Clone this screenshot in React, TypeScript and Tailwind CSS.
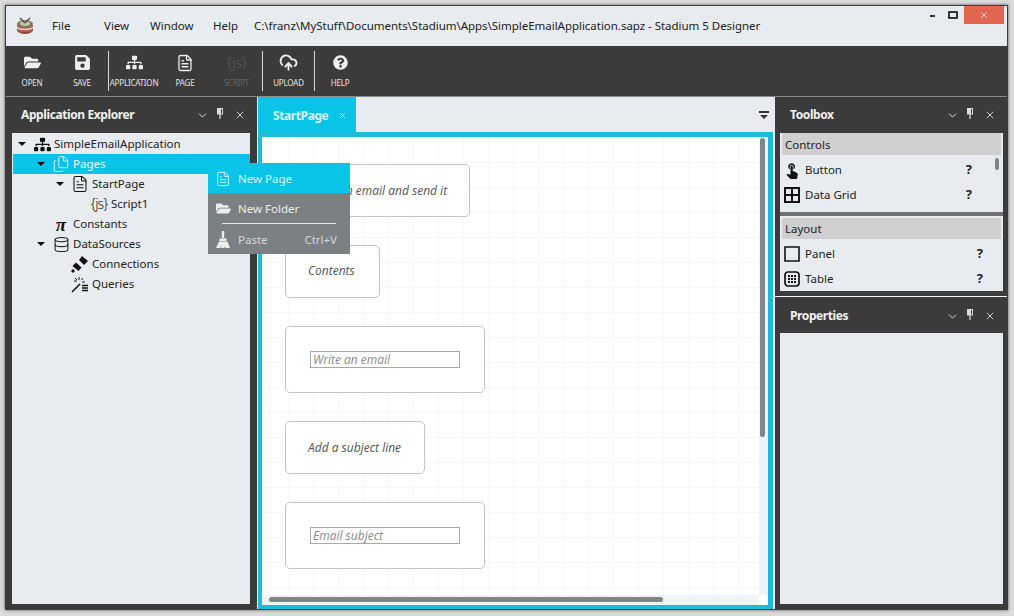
import React from "react";
import { ChevronDown, CloudUpload, Database, FileText, Files, X } from "lucide-react";
import { FaFolderOpen, FaQuestionCircle, FaSave, FaSitemap } from "react-icons/fa";
import { MdTouchApp } from "react-icons/md";

const Pin = ({ className = "" }: { className?: string }) => (
  <svg width="8" height="11" viewBox="0 0 8 11" className={className}>
    <path d="M1 0h6v6.5H1z M3.4 6.5h1.2V11H3.4z" fill="currentColor" />
    <path d="M5 1h1v4.5H5z" fill="#3b3b3b" />
  </svg>
);

const Logo = () => (
  <svg width="18" height="18" viewBox="0 0 18 18">
    <ellipse cx="9" cy="13" rx="8" ry="4" fill="#8e4a3c" />
    <path d="M1 8v5c2 3 14 3 16 0V8z" fill="#b5584a" />
    <path d="M1 9.5c2 3 14 3 16 0v1.5c-2 3-14 3-16 0z" fill="#f0d9d0" />
    <ellipse cx="9" cy="7" rx="8" ry="4" fill="#7d7a5c" />
    <ellipse cx="9" cy="6.5" rx="5" ry="2.4" fill="#c9c4a8" />
    <path d="M4 1l5 5M14 1L9 6" stroke="#5a3a30" strokeWidth="1.2" />
  </svg>
);

const Plug = () => (
  <svg width="18" height="18" viewBox="0 0 18 18" fill="#111">
    <path d="M11 1l6 5-4 4-5-5z" />
    <path d="M5 7.5l5.5 5-3 3.500-6-5z" />
    <path d="M0 16l2-2 2 2-2 2z" />
  </svg>
);

const Wand = () => (
  <svg width="18" height="18" viewBox="0 0 18 18" fill="none" stroke="#111">
    <path d="M1 17l8-8" strokeWidth="1.6" />
    <path d="M8 2v3M3 6h3M12 3l-1.500 2M14 7h-3M4 3l2 2" strokeWidth="1" />
    <path d="M11 10.500h6M11 13h6M11 15.500h6" strokeWidth="1.700" />
  </svg>
);

const Brush = () => (
  <svg width="14" height="17" viewBox="0 0 14 17" fill="#eee">
    <path d="M5.800 0h2.400v7H5.800z" />
    <path d="M3.500 7.500h7v2.500h-7z" />
    <path d="M3 10.500h8.500L14 17H9.500L9 14.500 8.500 17H5.500L5 14.500 4.500 17H0z" />
  </svg>
);

const GridIcon = () => (
  <svg width="16" height="16" viewBox="0 0 16 16" fill="none" stroke="#111" strokeWidth="2">
    <path d="M1 1h14v14H1z M8 1v14 M1 8h14" />
  </svg>
);

const PanelIcon = () => (
  <svg width="16" height="16" viewBox="0 0 16 16" fill="none" stroke="#111" strokeWidth="1.600">
    <path d="M1 1h14v14H1z" />
  </svg>
);

const TableIcon = () => (
  <svg width="16" height="16" viewBox="0 0 16 16">
    <rect x="1" y="1" width="14" height="14" rx="3" fill="none" stroke="#111" strokeWidth="1.700" />
    <path d="M4 4h2v2H4zM7 4h2v2H7zM10 4h2v2h-2zM4 7h2v2H4zM7 7h2v2H7zM10 7h2v2h-2zM4 10h2v2H4zM7 10h2v2H7zM10 10h2v2h-2z" fill="#111" />
  </svg>
);

const Arrow = () => (
  <span className="block w-0 h-0 border-x-[4px] border-x-transparent border-t-[4px] border-t-[#111]" />
);

type TreeRow = {
  label: string;
  pad: string;
  arrow?: boolean;
  selected?: boolean;
  icon: React.ReactNode;
};

const treeRows: TreeRow[] = [
  { label: "SimpleEmailApplication", pad: "pl-0", arrow: true, icon: <FaSitemap size={17} color="#111" /> },
  { label: "Pages", pad: "pl-[19px]", arrow: true, selected: true, icon: <Files size={18} color="#d7f1f8" strokeWidth={1.3} /> },
  { label: "StartPage", pad: "pl-[38px]", arrow: true, icon: <FileText size={18} color="#111" strokeWidth={1.400} /> },
  { label: "Script1", pad: "pl-[57px]", icon: <span className="text-[14px] leading-none tracking-[-1px] font-light text-[#222]">{"{js}"}</span> },
  { label: "Constants", pad: "pl-[19px]", icon: <span className="[font-family:'Liberation_Serif',serif] italic font-bold text-[19px] leading-none text-[#111]">π</span> },
  { label: "DataSources", pad: "pl-[19px]", arrow: true, icon: <Database size={17} color="#222" strokeWidth={1.500} /> },
  { label: "Connections", pad: "pl-[38px]", icon: <Plug /> },
  { label: "Queries", pad: "pl-[38px]", icon: <Wand /> },
];

const toolItems = [
  { label: "OPEN", w: "w-[50px]", icon: <FaFolderOpen size={17} color="#eee" /> },
  { label: "SAVE", w: "w-[50px]", icon: <FaSave size={17} color="#eee" /> },
  { sep: "ml-px" },
  { label: "APPLICATION", w: "w-[50px]", icon: <FaSitemap size={17} color="#eee" /> },
  { label: "PAGE", w: "w-[52px]", icon: <FileText size={18} color="#eee" strokeWidth={1.700} /> },
  { label: "SCRIPT", w: "w-[51px]", dim: true, icon: <span className="text-[15px] leading-none tracking-[-0.5px] font-light text-[#5c5c5c]">{"{js}"}</span> },
  { sep: "ml-0" },
  { label: "UPLOAD", w: "w-[51px]", icon: <CloudUpload size={19} color="#eee" strokeWidth={2.400} /> },
  { sep: "ml-0" },
  { label: "HELP", w: "w-[50px]", icon: <FaQuestionCircle size={15} color="#eee" /> },
];

const PanelTitle = ({ title, extra }: { title: string; extra?: string }) => (
  <div className={`flex items-center shrink-0 h-[36px] pl-[15px] pr-[11px] text-[#dcdcdc] ${extra ?? ""}`}>
    <span className="flex-1 text-[12px] tracking-[-0.4px] font-bold text-[#f2f2f2]">{title}</span>
    <ChevronDown size={13} strokeWidth={1.800} />
    <Pin className="ml-[7px] mb-[3px]" />
    <X size={12} strokeWidth={1.800} className="ml-[10px]" />
  </div>
);

const ToolRow = ({ icon, label, q }: { icon: React.ReactNode; label: string; q: string }) => (
  <div className="flex items-center h-[25px] text-[#222]">
    <span className="w-[24px] flex justify-center">{icon}</span>
    <span className="flex-1 ml-px">{label}</span>
    <span className={`text-[13px] font-bold ${q}`}>?</span>
  </div>
);

const cardText = "[font-family:'Open_Sans',sans-serif] italic text-[12px] text-[#555]";
const fieldText = "h-[17px] w-[150px] border border-[#a8a8a8] pl-[2px] leading-[15px] [font-family:'Open_Sans',sans-serif] italic text-[12px] text-[#8a8a8a]";

export default function App() {
  return (
    <div className="w-[1014px] h-[616px] bg-[#dadada] pt-[5px] pl-[5px] pr-[6px] pb-[6px] [font-family:'Noto_Sans',sans-serif] text-[11.5px] overflow-hidden">
      <div className="relative flex flex-col h-full border border-[#3b3b3b] shadow-[0_0_3px_#555]">
        {/* TITLE BAR */}
        <div className="relative flex items-center h-[40px] shrink-0 bg-[#e8ecf1] text-[#222]">
          <span className="ml-[10px] w-[36px] flex"><Logo /></span>
          <span className="w-[52px]">File</span>
          <span className="w-[46px]">View</span>
          <span className="w-[63px]">Window</span>
          <span className="w-[41px]">Help</span>
          <span className="tracking-[-0.03px]">C:\franz\MyStuff\Documents\Stadium\Apps\SimpleEmailApplication.sapz - Stadium 5 Designer</span>
          <div className="absolute right-[3px] top-0 flex items-start">
            <span className="mt-[9px] w-[5px] h-[2px] bg-[#333] mr-[13px]" />
            <span className="mt-[5px] w-[10px] h-[8px] border-2 border-[#333] rounded-[1px] mr-[6px]" />
            <span className="w-[40px] h-[18px] bg-[#e2664f] flex items-center justify-center text-[#f5e3de]"><X size={10} strokeWidth={2.200} /></span>
          </div>
        </div>

        {/* TOOLBAR */}
        <div className="flex items-center h-[51px] shrink-0 bg-[#3b3b3b] border-b border-[#8a8a8a] pl-px">
          {toolItems.map((item, i) =>
            item.sep ? (
              <span key={i} className={`w-px h-[40px] bg-[#d8d8d8] mt-[-1px] ${item.sep}`} />
            ) : (
              <div key={i} className={`flex flex-col items-center mt-[-3px] ${item.w}`}>
                <span className="h-[22px] flex items-center">{item.icon}</span>
                <span className={`mt-[4px] text-[8px] leading-[10px] tracking-[-0.2px] ${item.dim ? "text-[#666]" : "text-[#e4e4e4]"}`}>{item.label}</span>
              </div>
            ),
          )}
        </div>

        {/* MAIN */}
        <div className="flex flex-1 min-h-0">
          {/* APPLICATION EXPLORER */}
          <div className="flex flex-col w-[251px] shrink-0 bg-[#3b3b3b]">
            <PanelTitle title="Application Explorer" />
            <div className="flex-1 ml-[6px] mr-[7px] mb-[5px] bg-[#e8ecf1] pl-px pt-px text-[#222]">
              {treeRows.map((r) => (
                <div key={r.label} className={`flex items-center h-[20px] ${r.pad} ${r.selected ? "bg-[#0ac4e8] text-[#e9f9fd]" : ""}`}>
                  <span className="w-[18px] flex justify-center">{r.arrow && <Arrow />}</span>
                  <span className="w-[22px] flex justify-center">{r.icon}</span>
                  <span className="ml-px">{r.label}</span>
                </div>
              ))}
            </div>
          </div>

          {/* DESIGN AREA */}
          <div className="flex flex-col w-[518px] shrink-0 bg-[#e8ecf1] pl-px pr-[2px]">
            <div className="flex items-center justify-between h-[35px] shrink-0">
              <div className="flex items-center w-[98px] h-full bg-[#0ac4e8] pl-[15px] pt-[2px] text-[#d9f5fb]">
                <span className="text-[12px] tracking-[-0.4px] font-bold">StartPage</span>
                <X size={9} strokeWidth={2} className="ml-[10px]" />
              </div>
              <svg width="10" height="10" viewBox="0 0 10 10" className="mr-[4px]">
                <path d="M0 1h10v2H0zM1 5h8L5 9z" fill="#333" />
              </svg>
            </div>
            <div className="relative flex-1 min-h-0 border-t-[5px] border-l-[4px] border-r-[5px] border-b-[4px] border-[#1dbdd8] bg-white bg-[linear-gradient(#f7f7f7_1px,transparent_1px),linear-gradient(90deg,#f7f7f7_1px,transparent_1px)] bg-[size:25px_25px] bg-[position:1px_0] overflow-hidden">
              <div className="flex flex-col items-start gap-[28px] pl-[23px] pt-[27px]">
                <div className={`flex items-center w-[185px] h-[53px] bg-white border border-[#c4c4c4] rounded-[5px] pl-[22px] ${cardText}`}>Write an email and send it</div>
                <div className={`flex items-center w-[95px] h-[53px] bg-white border border-[#c4c4c4] rounded-[5px] pl-[22px] pb-[2px] ${cardText}`}>Contents</div>
                <div className="flex items-center w-[200px] h-[67px] bg-white border border-[#c4c4c4] rounded-[5px] pl-[24px]">
                  <div className={fieldText}>Write an email</div>
                </div>
                <div className={`flex items-center w-[140px] h-[53px] bg-white border border-[#c4c4c4] rounded-[5px] pl-[22px] ${cardText}`}>Add a subject line</div>
                <div className="flex items-center w-[200px] h-[67px] bg-white border border-[#c4c4c4] rounded-[5px] pl-[24px]">
                  <div className={fieldText}>Email subject</div>
                </div>
              </div>
              {/* scrollbars */}
              <div className="absolute right-0 top-0 bottom-0 w-[9px] bg-[#f1f4f7]" />
              <div className="absolute left-0 right-0 bottom-0 h-[10px] bg-[#f1f4f7]" />
              <div className="absolute right-0 bottom-0 w-[9px] h-[10px] bg-white" />
              <div className="absolute right-[3px] top-px w-[5px] h-[299px] rounded-full bg-[#7f8589]" />
              <div className="absolute left-[7px] bottom-[3px] w-[394px] h-[5px] rounded-full bg-[#7f8589]" />
            </div>
          </div>

          {/* RIGHT COLUMN */}
          <div className="flex flex-col flex-1 min-w-0 bg-[#3b3b3b]">
            <PanelTitle title="Toolbox" />
            <div className="relative h-[158px] shrink-0 ml-[5px] mr-[4px] bg-[#e8ecf1]">
              <div className="flex flex-col h-[79px] px-[2px]">
                <div className="h-[22px] bg-[#cfcfcf] pl-[3px] leading-[23px] text-[#222]">Controls</div>
              </div>
              <div className="absolute left-0 right-0 top-[24px]">
                <ToolRow icon={<MdTouchApp size={18} color="#111" />} label="Button" q="mr-[31px]" />
                <ToolRow icon={<GridIcon />} label="Data Grid" q="mr-[31px]" />
              </div>
              <div className="absolute right-[4px] top-[25px] w-[4px] h-[12px] rounded-full bg-[#7f8589]" />
              <div className="h-[4px] bg-[#6e7072]" />
              <div className="mt-[2px] mx-[2px] h-[21px] bg-[#cfcfcf] pl-[3px] leading-[21px] text-[#222]">Layout</div>
              <div className="pt-[2px]">
                <ToolRow icon={<PanelIcon />} label="Panel" q="mr-[20px]" />
                <ToolRow icon={<TableIcon />} label="Table" q="mr-[20px]" />
              </div>
            </div>
            <div className="h-[5px] shrink-0" />
            <div className="h-px shrink-0 bg-[#f4f6f8]" />
            <PanelTitle title="Properties" extra="pt-[2px]" />
            <div className="flex-1 ml-[5px] mr-[4px] mb-[5px] bg-[#e8ecf1]" />
          </div>
        </div>

        {/* CONTEXT MENU */}
        <div className="absolute left-[202px] top-[157px] w-[142px] bg-[#7b8083] text-[11.5px]">
          <div className="flex items-center h-[30px] pt-px bg-[#0ac4e8] text-[#d9f5fb]">
            <span className="w-[30px] flex justify-center"><FileText size={16} strokeWidth={1.400} /></span>
            <span>New Page</span>
          </div>
          <div className="flex items-center h-[30px] pt-px text-[#ebedee]">
            <span className="w-[30px] flex justify-center"><FaFolderOpen size={15} /></span>
            <span>New Folder</span>
          </div>
          <div className="h-px mx-[14px] bg-[#e4e6e7]" />
          <div className="flex items-center h-[30px] pt-px text-[#d4d7d9] pr-[13px]">
            <span className="w-[30px] flex justify-center"><Brush /></span>
            <span className="flex-1">Paste</span>
            <span>Ctrl+V</span>
          </div>
        </div>
      </div>
    </div>
  );
}
